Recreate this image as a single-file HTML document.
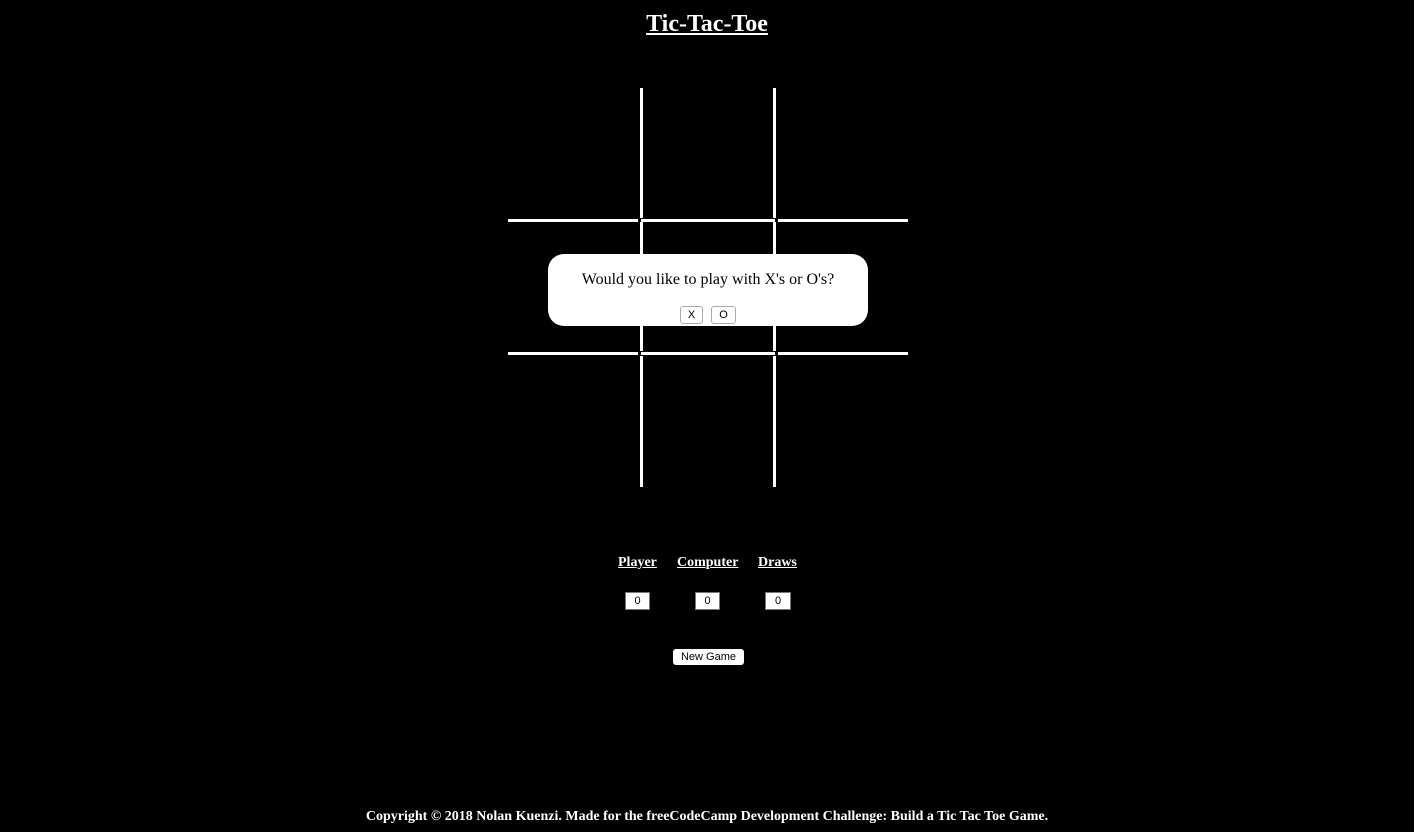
<!DOCTYPE html>
<html><head><style>
body{margin:0;background:#000;width:1414px;height:832px;position:relative;overflow:hidden;font-family:"Liberation Serif",serif;color:#fff}
.a{position:absolute;background:#fff}
h1{position:absolute;top:11px;left:0;width:1414px;text-align:center;margin:0;font-size:24px;font-weight:bold;text-decoration:underline}
.pop{position:absolute;left:548px;top:254px;width:320px;height:72px;background:#fff;border-radius:16px;color:#000;text-align:center}
.pop p{margin:0;position:absolute;top:17px;width:100%;font-size:16px}
.btn{position:absolute;background:#fff;border:1px solid #aaa;border-radius:3px;font:11px "Liberation Sans",sans-serif;color:#000;text-align:center;box-sizing:border-box}
.lbl{position:absolute;top:555px;font-size:14px;font-weight:bold;text-decoration:underline}
.sc{position:absolute;top:592px;width:25px;height:18px;background:#fff;border:1px solid #777;box-sizing:border-box;color:#000;font:11px "Liberation Sans",sans-serif;text-align:center;line-height:17px}
.foot{position:absolute;top:809px;width:1414px;text-align:center;font-size:14px;font-weight:bold}
</style></head><body>
<h1>Tic-Tac-Toe</h1>
<div class="a" style="left:640px;top:88px;width:3px;height:130px"></div>
<div class="a" style="left:640px;top:222px;width:3px;height:129px"></div>
<div class="a" style="left:640px;top:356px;width:3px;height:131px"></div>
<div class="a" style="left:773px;top:88px;width:3px;height:130px"></div>
<div class="a" style="left:773px;top:222px;width:3px;height:129px"></div>
<div class="a" style="left:773px;top:356px;width:3px;height:131px"></div>
<div class="a" style="left:508px;top:219px;width:130px;height:3px"></div>
<div class="a" style="left:641px;top:219px;width:134px;height:3px"></div>
<div class="a" style="left:778px;top:219px;width:130px;height:3px"></div>
<div class="a" style="left:508px;top:352px;width:130px;height:3px"></div>
<div class="a" style="left:641px;top:352px;width:134px;height:3px"></div>
<div class="a" style="left:778px;top:352px;width:130px;height:3px"></div>
<div class="pop"><p>Would you like to play with X's or O's?</p>
<div class="btn" style="left:132px;top:52px;width:23px;height:18px;line-height:17px">X</div>
<div class="btn" style="left:163px;top:52px;width:25px;height:18px;line-height:17px">O</div>
</div>
<div class="lbl" style="left:618px">Player</div>
<div class="lbl" style="left:677px">Computer</div>
<div class="lbl" style="left:758px">Draws</div>
<div class="sc" style="left:625px">0</div>
<div class="sc" style="left:695px">0</div>
<div class="sc" style="left:765px;width:26px">0</div>
<div class="btn" style="left:673px;top:649px;width:71px;height:16px;line-height:17px;border:none">New Game</div>
<div class="foot">Copyright © 2018 Nolan Kuenzi. Made for the freeCodeCamp Development Challenge: Build a Tic Tac Toe Game.</div>
</body></html>
